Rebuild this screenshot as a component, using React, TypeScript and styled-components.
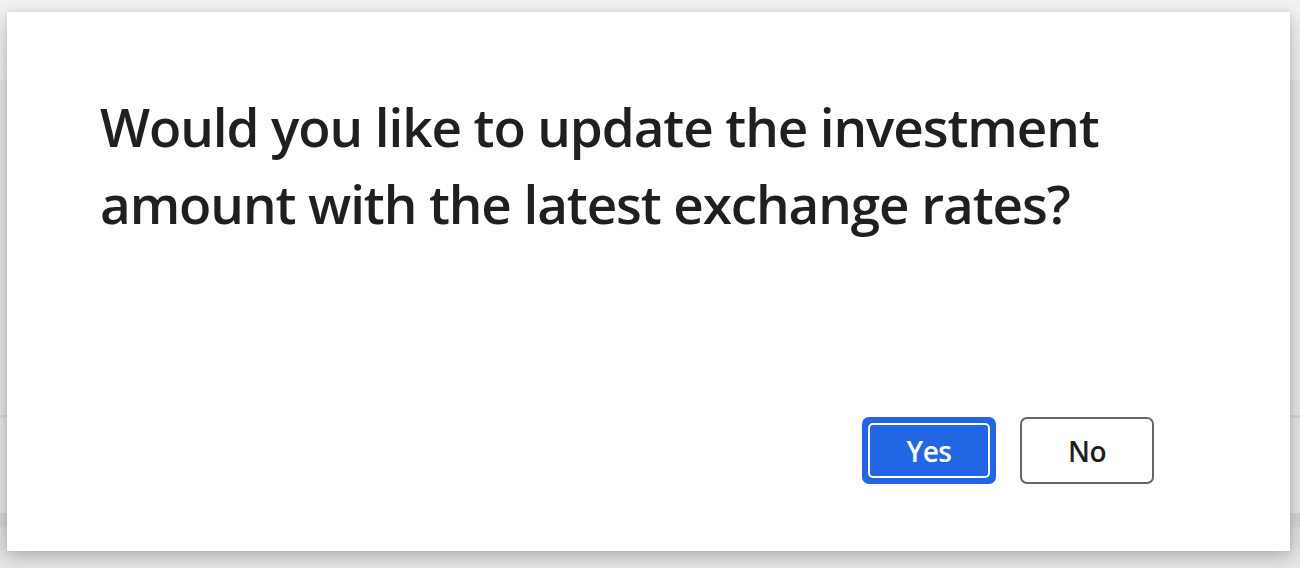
import React from "react";
import styled, { createGlobalStyle } from "styled-components";

const GlobalStyle = createGlobalStyle`
  html, body {
    margin: 0;
    padding: 0;
    width: 1300px;
    height: 568px;
    overflow: hidden;
    font-family: "Open Sans", "Noto Sans", sans-serif;
  }
`;

const Page = styled.div`
  position: relative;
  width: 1300px;
  height: 568px;
  display: flex;
  flex-direction: column;
  background: #e2e2e2;
`;

const PageBand = styled.div<{ $h: number; $bg: string }>`
  height: ${(p) => p.$h}px;
  background: ${(p) => p.$bg};
  flex-shrink: 0;
`;

const Dialog = styled.div`
  position: absolute;
  left: 7px;
  top: 12px;
  width: 1283px;
  height: 539px;
  box-sizing: border-box;
  background: #ffffff;
  box-shadow: 0 6px 18px rgba(0, 0, 0, 0.22), 0 0 6px rgba(0, 0, 0, 0.08);
  display: flex;
  flex-direction: column;
  justify-content: space-between;
  padding: 76px 136px 67px 93px;
`;

const Message = styled.h1`
  margin: 0;
  font-size: 53px;
  font-weight: 600;
  letter-spacing: -1.1px;
  line-height: 77px;
  color: #1f1f1f;
  max-width: 1040px;
`;

const Actions = styled.div`
  display: flex;
  justify-content: flex-end;
  gap: 24px;
`;

const Button = styled.button<{ $primary?: boolean }>`
  position: relative;
  width: 134px;
  height: 67px;
  box-sizing: border-box;
  border-radius: 7px;
  font-family: inherit;
  font-size: 28px;
  font-weight: 600;
  letter-spacing: -0.5px;
  cursor: pointer;
  color: ${(p) => (p.$primary ? "#ffffff" : "#1f1f1f")};
  background: ${(p) => (p.$primary ? "#2366e3" : "#ffffff")};
  border: 2px solid ${(p) => (p.$primary ? "#2366e3" : "#666666")};

  &::after {
    content: "";
    display: ${(p) => (p.$primary ? "block" : "none")};
    position: absolute;
    inset: 4px;
    border: 2px solid #ffffff;
    border-radius: 5px;
    pointer-events: none;
  }
`;

export default function App() {
  return (
    <>
      <GlobalStyle />
      <Page>
        <PageBand $h={80} $bg="linear-gradient(#f2f2f2, #ebebeb)" />
        <PageBand $h={335} $bg="#e4e4e4" />
        <PageBand $h={3} $bg="#d6d6d6" />
        <PageBand $h={95} $bg="#e4e4e4" />
        <PageBand $h={14} $bg="#d4d4d4" />
        <PageBand $h={41} $bg="linear-gradient(#dcdcdc, #e8e8e8)" />
        <Dialog role="dialog">
          <Message>
            Would you like to update the investment amount with the latest exchange rates?
          </Message>
          <Actions>
            <Button $primary>Yes</Button>
            <Button>No</Button>
          </Actions>
        </Dialog>
      </Page>
    </>
  );
}
